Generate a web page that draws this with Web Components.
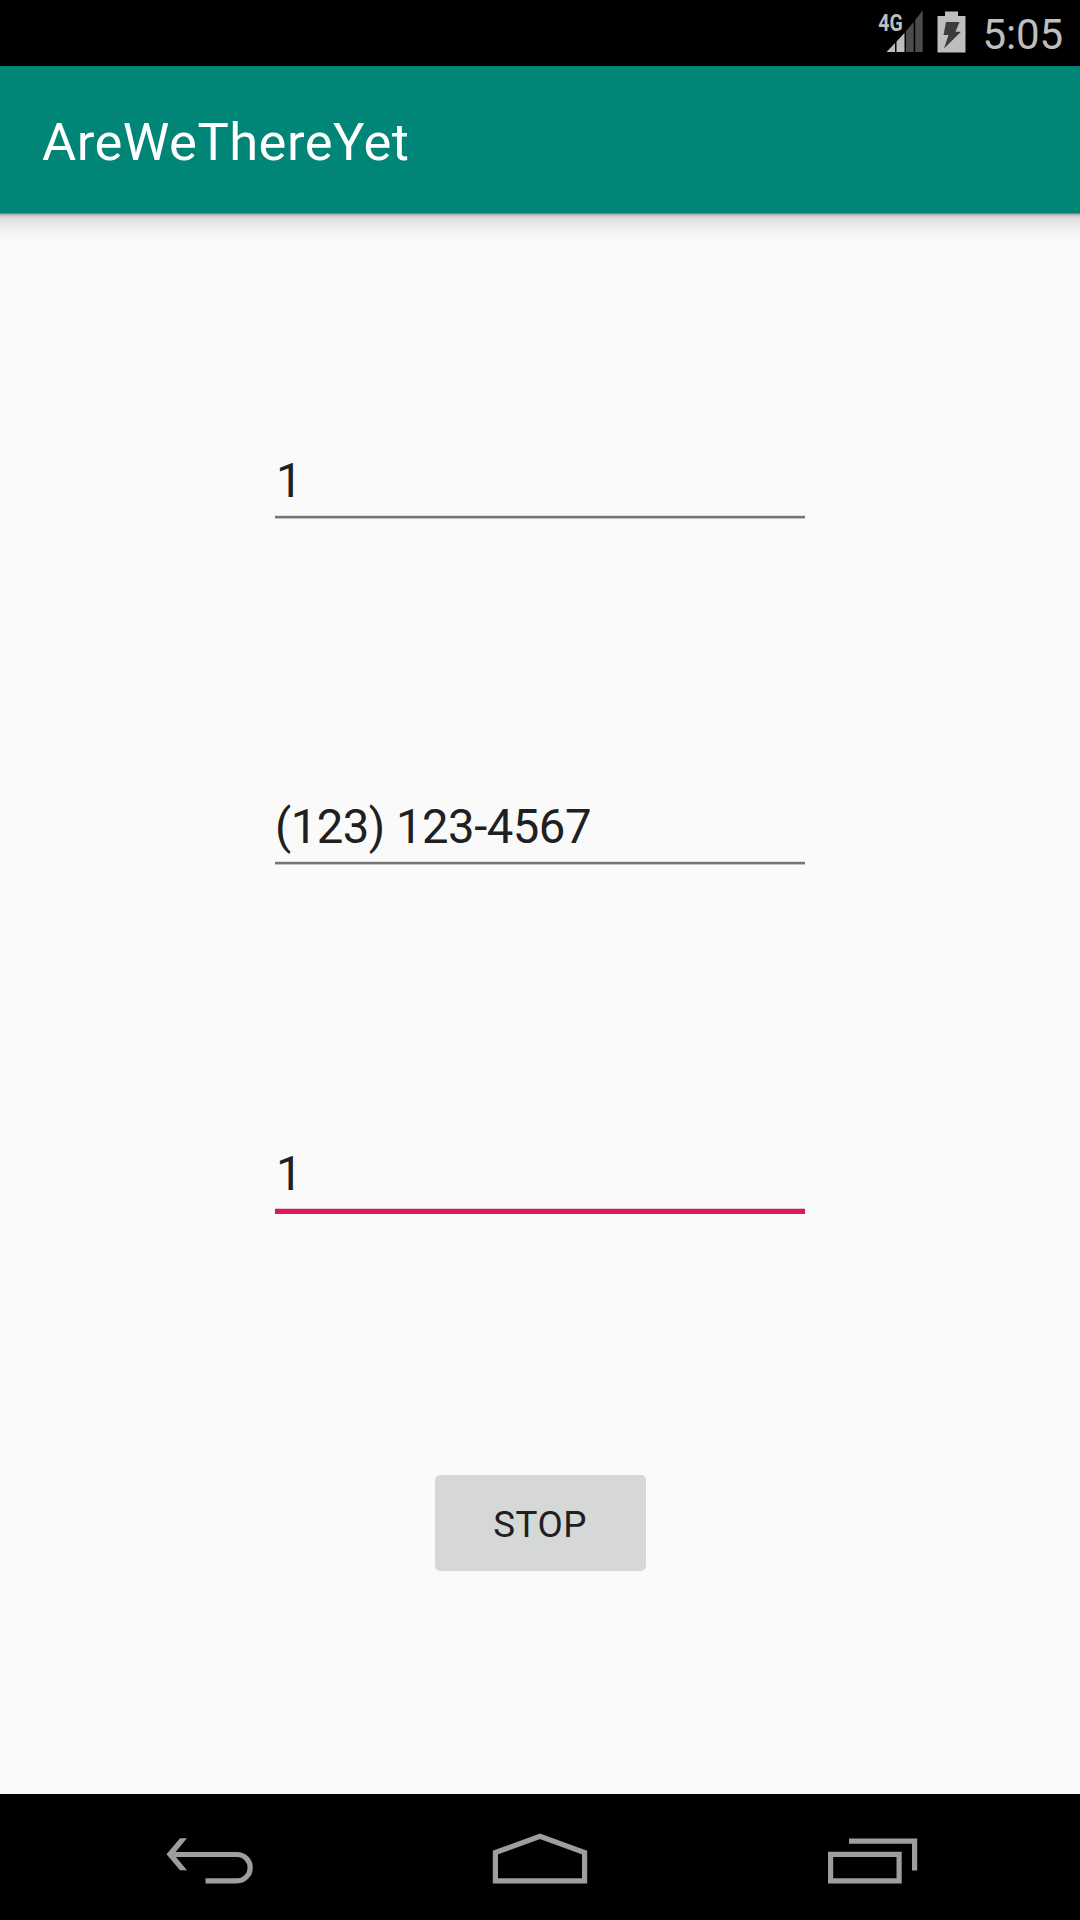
<!DOCTYPE html>
<html lang="en">
<head>
<meta charset="utf-8">
<title>AreWeThereYet</title>
<style>
html,body{margin:0;height:100%}
body{font-family:Roboto,sans-serif;background:#fafafa;overflow:hidden}
</style>
</head>
<body>
<app-screen>
  <status-bar slot="status">5:05</status-bar>
  <app-bar slot="bar">AreWeThereYet</app-bar>
  <edit-field class="digit">1</edit-field>
  <edit-field>(123) 123-4567</edit-field>
  <edit-field class="digit" focused>1</edit-field>
  <raised-button>STOP</raised-button>
  <nav-bar slot="nav"></nav-bar>
</app-screen>
<script>
const define = (name, html) => {
  const t = document.createElement('template');
  t.innerHTML = html;
  customElements.define(name, class extends HTMLElement {
    constructor() {
      super();
      this.attachShadow({mode: 'open'}).append(t.content.cloneNode(true));
    }
  });
};

define('app-screen', `
<style>
:host{display:flex;flex-direction:column;width:1080px;height:1920px;background:#fafafa}
main{flex:1;display:flex;flex-direction:column;align-items:center;padding-top:240px;box-sizing:border-box;
background:linear-gradient(#868686 0 1px,#aeaeae 1px 2px,#c8c8c8 2px 3px,#dadada 4px,#e3e3e3 7px,#ececec 13px,#f3f3f3 20px,#f8f8f8 27px,#fafafa 34px)}
::slotted(edit-field){margin-bottom:278px}
::slotted(edit-field:nth-of-type(2)){margin-bottom:279px}
::slotted(edit-field[focused]){margin-bottom:261px}
</style>
<slot name="status"></slot><slot name="bar"></slot><main><slot></slot></main><slot name="nav"></slot>`);

define('status-bar', `
<style>
:host{display:flex;justify-content:flex-end;height:66px;background:#000;color:#bebebe;padding-right:17px;box-sizing:border-box}
svg{display:block;width:117px;height:66px;overflow:visible}
.net{font:bold 24.5px Roboto,sans-serif}
.time{font-size:42px;line-height:50px;padding-top:10px;letter-spacing:-.1px}
</style>
<svg viewBox="0 0 117 66" fill="#bebebe">
<text class="net" x="13.3" y="30.7" textLength="24.5" lengthAdjust="spacingAndGlyphs">4G</text>
<path d="M21.5 52L30 43V52Z M31.5 41.5L39.5 33V52H31.5Z"/>
<path fill="#4b4b4b" d="M41 31L48.7 22V52H41Z M50.2 20L57.7 10.5V52H50.2Z"/>
<path d="M80 11.5H93V16H100.5V52.5H72.5V16H80Z"/>
<path fill="#3c3c3c" d="M81 22H94.5L90.5 31.7H96L79 48.5L83.5 35H78.5Z"/>
</svg><span class="time"><slot></slot></span>`);

define('app-bar', `
<style>
:host{display:flex;align-items:center;height:147px;padding:0 42px;box-sizing:border-box;background:#008577;color:#fff;font-size:52.5px;line-height:62px;letter-spacing:.48px}
span{padding-top:4px}
</style><span><slot></slot></span>`);

define('edit-field', `
<style>
:host{display:flex;flex-direction:column;width:530px;height:68px;font-size:47.25px;line-height:56px;letter-spacing:-.5px;color:#202020}
span{white-space:nowrap}
:host(.digit) span{padding-left:1px}
i{margin-top:6px;height:4px;background:linear-gradient(#dedfde 0 1px,#747674 1px 3px,#c2c4c2 3px)}
:host([focused]) i{height:6px;background:linear-gradient(#f3c0d2 0 1px,#d81b60 1px)}
</style><span><slot></slot></span><i></i>`);

define('raised-button', `
<style>
:host{display:flex;align-items:center;justify-content:center;width:211px;height:96px;border-radius:5px;background:#d6d8d7;color:#202020;font-size:36.75px;line-height:44px;letter-spacing:.5px}
span{padding-top:4px}
</style><span><slot></slot></span>`);

define('nav-bar', `
<style>
:host{display:flex;height:126px;padding-left:150px;box-sizing:border-box;background:#000}
svg{width:120px;height:126px;fill:none;stroke:#9e9e9e;stroke-width:5.2}
.home{margin:0 215px 0 210px}
</style>
<svg viewBox="0 9 120 126"><path d="M24 69.5H87A13.2 13.2 0 0 1 87 95.9H55.5"/><path fill="#9e9e9e" stroke="none" d="M16.5 69.3L30 53.3H37L23.7 69.3L37 85.3H30Z"/></svg>
<svg class="home" viewBox="0 9 120 126"><path d="M15.4 67.5L60 51.3L104.6 67.5V95.8H15.4Z"/></svg>
<svg viewBox="0 9 120 126"><path d="M15.6 69.4H84.1V95.8H15.6Z"/><path d="M34 56.2H99.6V85.5"/></svg>`);
</script>
</body>
</html>
